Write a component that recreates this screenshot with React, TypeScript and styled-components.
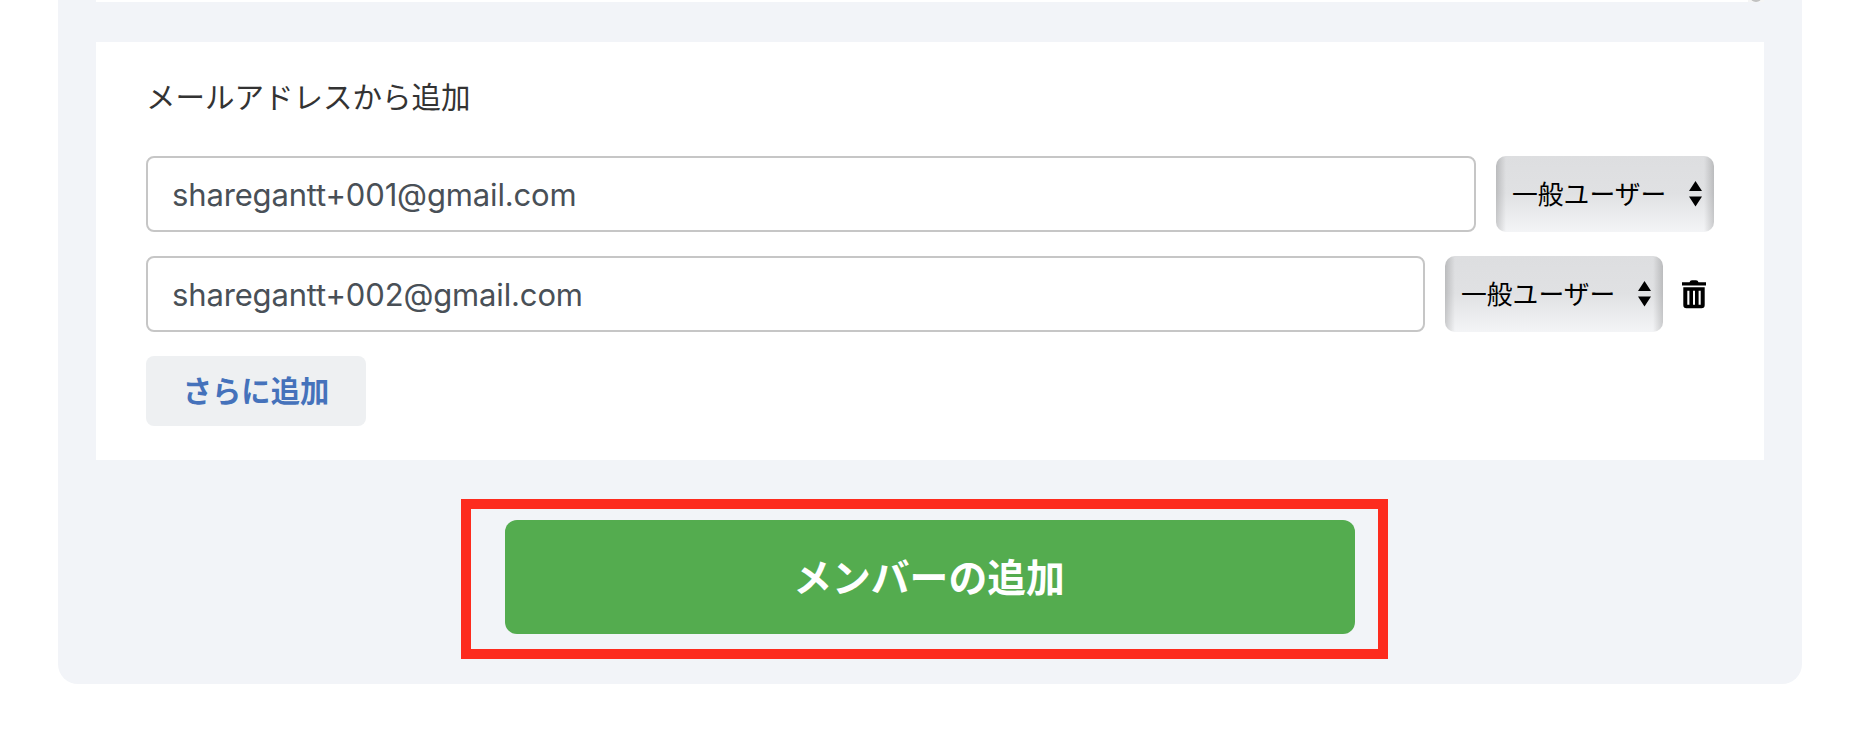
import React, { useState } from "react";
import { createGlobalStyle, styled } from "styled-components";

type Member = {
  email: string;
  removable: boolean;
};

function App(): React.ReactElement {
  const [members, setMembers] = useState<Member[]>([
    { email: "sharegantt+001@gmail.com", removable: false },
    { email: "sharegantt+002@gmail.com", removable: true },
  ]);

  const handleChange =
    (i: number) => (e: React.ChangeEvent<HTMLInputElement>) => {
      const email = e.target.value;
      setMembers(members.map((m, j) => (i === j ? { ...m, email } : m)));
    };
  const handleRemove = (i: number) => () => {
    setMembers(members.filter((_, j) => i !== j));
  };
  const handleAdd = () => {
    setMembers([...members, { email: "", removable: true }]);
  };

  return (
    <>
      <GlobalStyle />
      <Panel>
        <ListBottom>
          <ScrollTrack>
            <ScrollThumb />
          </ScrollTrack>
        </ListBottom>
        <Card>
          <Heading>メールアドレスから追加</Heading>
          {members.map((m, i) => (
            <MemberRow key={i}>
              <EmailInput
                type="text"
                spellCheck={false}
                value={m.email}
                onChange={handleChange(i)}
              />
              <RoleSelect type="button">
                <RoleLabel>一般ユーザー</RoleLabel>
                <Arrows />
              </RoleSelect>
              {m.removable && (
                <TrashButton type="button" onClick={handleRemove(i)}>
                  <TrashIcon />
                </TrashButton>
              )}
            </MemberRow>
          ))}
          <MoreButton type="button" onClick={handleAdd}>
            さらに追加
          </MoreButton>
        </Card>
        <SubmitArea>
          <SubmitButton type="button">メンバーの追加</SubmitButton>
          <Highlight />
        </SubmitArea>
      </Panel>
    </>
  );
}

export default App;

function Arrows() {
  return (
    <svg width="13" height="26" viewBox="0 0 13 26">
      <path d="M6.5 0L13 10H0zM0 15.5H13L6.5 25.5z" />
    </svg>
  );
}

function TrashIcon() {
  return (
    <svg width="24" height="29" viewBox="0 0 24 29">
      <path d="M0 2.2H7.5Q8 .3 10 .3H14Q16 .3 16.5 2.2H24V5.5H0z" />
      <path
        fillRule="evenodd"
        d="M1.3 7.3H22.7V25Q22.7 28.3 19.5 28.3H4.5Q1.3 28.3 1.3 25zM5.3 10.8V24.7H7.4V10.8zM11 10.8V24.7H13V10.8zM16.6 10.8V24.7H18.7V10.8z"
      />
    </svg>
  );
}

const GlobalStyle = createGlobalStyle`
  * {
    box-sizing: border-box;
  }
  body {
    margin: 0;
    background-color: #fff;
    font-family: "Noto Sans CJK JP", sans-serif;
    overflow: hidden;
  }
  button {
    border: none;
    padding: 0;
    font-family: inherit;
    white-space: nowrap;
  }
`;

const Panel = styled.div`
  width: 1744px;
  height: 684px;
  margin-left: 58px;
  padding: 0 38px;
  background-color: #f2f4f8;
  border-radius: 0 0 20px 20px;
`;

const ListBottom = styled.div`
  display: flex;
  justify-content: flex-end;
  height: 2px;
  margin-bottom: 40px;
  background-color: #fff;
`;
const ScrollTrack = styled.div`
  display: flex;
  justify-content: center;
  align-items: flex-end;
  width: 16px;
  height: 2px;
  background-color: #f5f5f5;
  overflow: hidden;
`;
const ScrollThumb = styled.div`
  flex: none;
  width: 12px;
  height: 24px;
  border-radius: 6px;
  background-color: #c1c1c1;
`;

const Card = styled.div`
  height: 418px;
  padding: 33px 50px 0;
  background-color: #fff;
`;
const Heading = styled.div`
  height: 81px;
  line-height: 40px;
  font-size: 29.5px;
  color: #333;
`;
const MemberRow = styled.div`
  display: flex;
  align-items: center;
  height: 76px;
  margin-bottom: 24px;
`;
const EmailInput = styled.input`
  flex: 1;
  min-width: 0;
  height: 76px;
  padding: 0 24px;
  border: 2px solid #c6c6c6;
  border-radius: 8px;
  outline: none;
  font-family: Inter, sans-serif;
  font-size: 31px;
  letter-spacing: -0.15px;
  color: #495057;
`;
const RoleSelect = styled.button`
  display: flex;
  align-items: center;
  justify-content: space-between;
  width: 218px;
  height: 76px;
  margin-left: 20px;
  padding: 0 12px 0 16px;
  border-radius: 10px;
  background:
    linear-gradient(
      to right,
      rgba(0, 0, 0, 0.16),
      transparent 10px,
      transparent calc(100% - 10px),
      rgba(0, 0, 0, 0.16)
    ),
    linear-gradient(#dddee0, #e0e1e3 50%, #f3f4f6);
  color: #000;
`;
const RoleLabel = styled.span`
  padding-bottom: 2px;
  font-size: 25.8px;
  line-height: 38px;
`;
const TrashButton = styled.button`
  display: flex;
  margin: 0 8px 0 19px;
  background: transparent;
`;
const MoreButton = styled.button`
  display: block;
  width: 220px;
  height: 70px;
  padding-bottom: 4px;
  border-radius: 8px;
  background-color: #eef0f2;
  font-size: 29.3px;
  font-weight: 700;
  color: #4572bb;
`;

const SubmitArea = styled.div`
  position: relative;
  width: 850px;
  height: 114px;
  margin: 60px auto 0 409px;
`;
const SubmitButton = styled.button`
  width: 100%;
  height: 100%;
  padding: 0 2px 4px 0;
  border-radius: 12px;
  background-color: #54ac4f;
  font-size: 38.8px;
  font-weight: 700;
  color: #fff;
`;
const Highlight = styled.div`
  position: absolute;
  top: -21px;
  left: -44px;
  width: 927px;
  height: 160px;
  border: 10px solid #fd2b1e;
  pointer-events: none;
`;
